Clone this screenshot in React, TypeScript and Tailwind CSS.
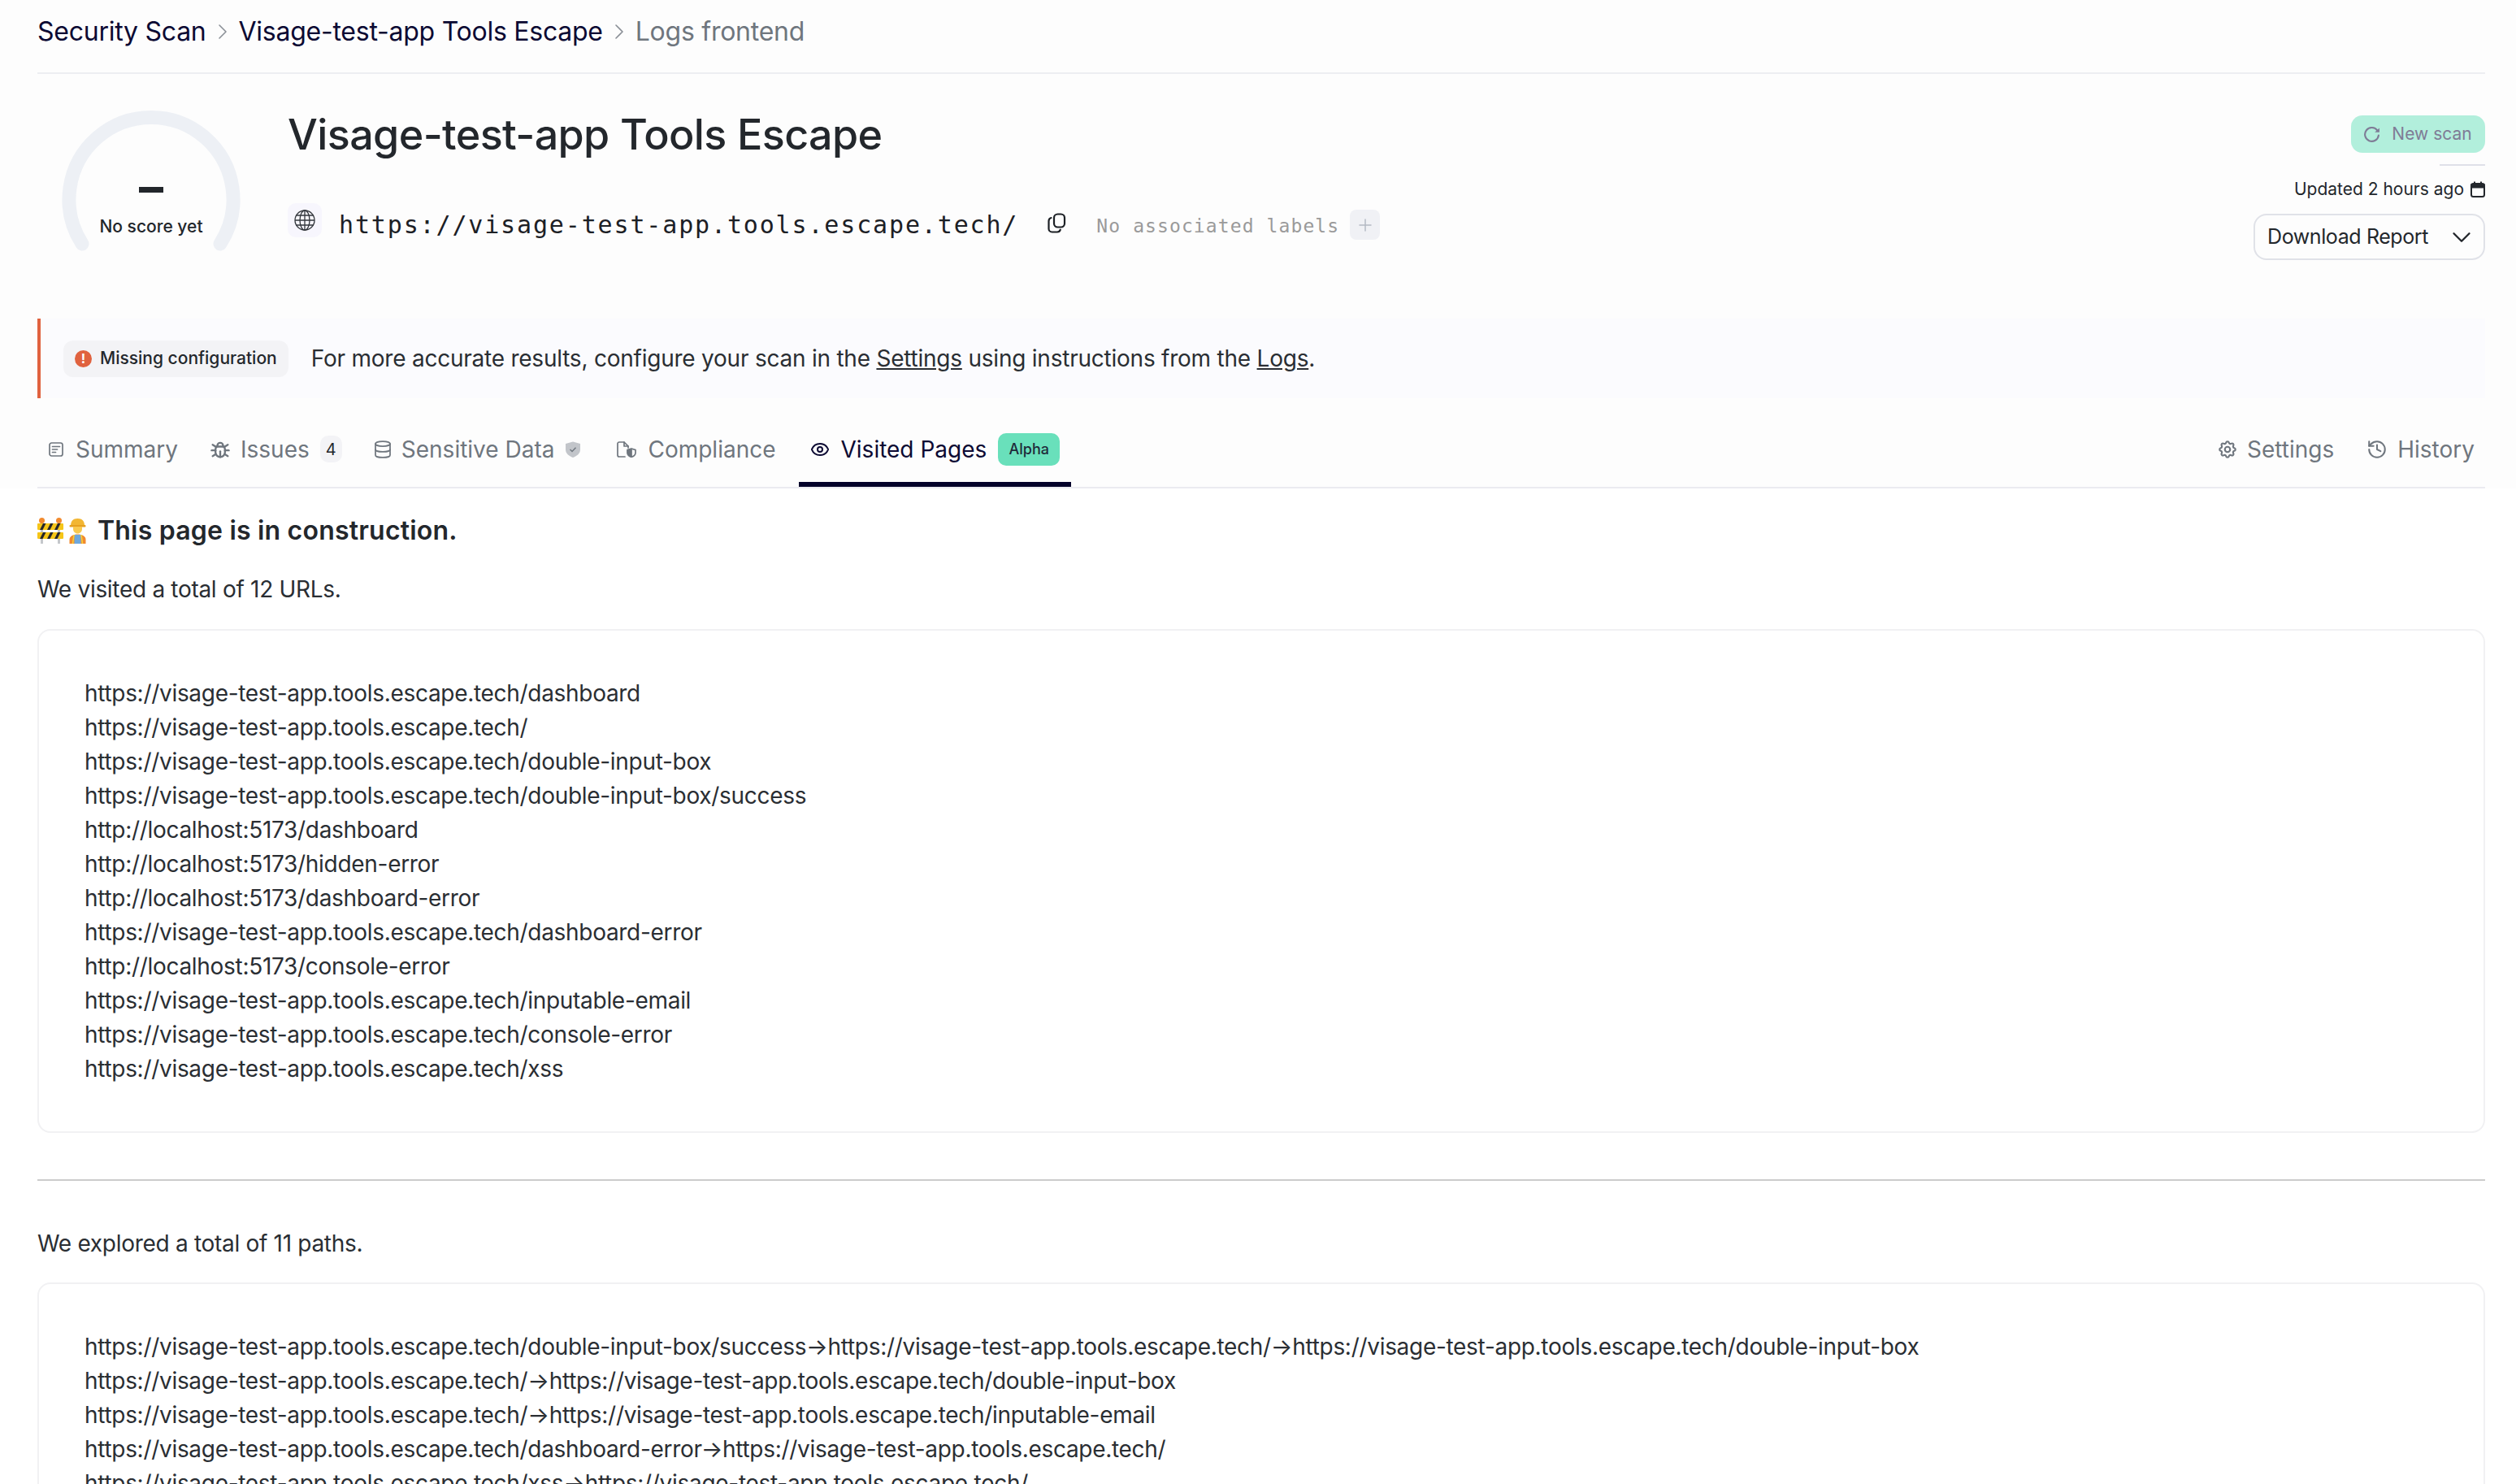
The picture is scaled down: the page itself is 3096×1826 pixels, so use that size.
import { ChevronDown, ChevronRight, Database, Eye, History, Plus } from "lucide-react";
import { TbBug, TbSettings } from "react-icons/tb";

const visitedUrls = [
  "https://visage-test-app.tools.escape.tech/dashboard",
  "https://visage-test-app.tools.escape.tech/",
  "https://visage-test-app.tools.escape.tech/double-input-box",
  "https://visage-test-app.tools.escape.tech/double-input-box/success",
  "http://localhost:5173/dashboard",
  "http://localhost:5173/hidden-error",
  "http://localhost:5173/dashboard-error",
  "https://visage-test-app.tools.escape.tech/dashboard-error",
  "http://localhost:5173/console-error",
  "https://visage-test-app.tools.escape.tech/inputable-email",
  "https://visage-test-app.tools.escape.tech/console-error",
  "https://visage-test-app.tools.escape.tech/xss",
];

const exploredPaths = [
  "https://visage-test-app.tools.escape.tech/double-input-box/success→https://visage-test-app.tools.escape.tech/→https://visage-test-app.tools.escape.tech/double-input-box",
  "https://visage-test-app.tools.escape.tech/→https://visage-test-app.tools.escape.tech/double-input-box",
  "https://visage-test-app.tools.escape.tech/→https://visage-test-app.tools.escape.tech/inputable-email",
  "https://visage-test-app.tools.escape.tech/dashboard-error→https://visage-test-app.tools.escape.tech/",
  "https://visage-test-app.tools.escape.tech/xss→https://visage-test-app.tools.escape.tech/",
];

function ScoreGauge() {
  return (
    <div className="relative mt-[1px] h-[176px] w-[220px] shrink-0">
      <svg width="220" height="176" viewBox="0 0 220 176" fill="none">
        <path d="M25 165 A101 101 0 1 1 195 165" stroke="#edf0f5" strokeWidth="17" strokeLinecap="round" />
      </svg>
      <div className="absolute left-0 right-0 top-[95px] flex justify-center">
        <div className="h-[7px] w-[30px] bg-[#22262b]" />
      </div>
      <p className="absolute left-0 right-0 top-[130px] text-center text-[21px] font-medium leading-[28px] text-[#22262b]">No score yet</p>
    </div>
  );
}

function GlobeIcon() {
  return (
    <svg width="26" height="26" viewBox="0 0 26 26" fill="none" stroke="#33373c" strokeWidth="1.3">
      <circle cx="13" cy="13" r="12" />
      <ellipse cx="13" cy="13" rx="6" ry="12" />
      <path d="M13 1v24M2 7h22M1 13h24M2 19h22" />
    </svg>
  );
}

function CopyIcon() {
  return (
    <svg width="23" height="25" viewBox="0 0 23 25" fill="none" stroke="#1c2025" strokeWidth="2.2" strokeLinecap="round">
      <rect x="8" y="1.5" width="13" height="16" rx="4.5" />
      <path d="M4.5 6C2.5 6.5 1.5 8 1.5 10v9.5a4 4 0 0 0 4 4h6.5a4 4 0 0 0 3.8-2.8" />
    </svg>
  );
}

function NewScanIcon() {
  return (
    <svg width="20" height="19" viewBox="0 0 19 18" fill="none" stroke="#7f7c96" strokeWidth="2">
      <path d="M15.5 4.2A8 8 0 1 0 17 10" strokeLinecap="round" />
      <path d="M12.5 6.5L18 1.5V6.5Z" fill="#7f7c96" stroke="none" />
    </svg>
  );
}

function CalendarIcon() {
  return (
    <svg width="18" height="20" viewBox="0 0 18 20" fill="none" stroke="#23272c" strokeWidth="2">
      <rect x="1" y="3" width="16" height="16" rx="2.5" />
      <path d="M1.5 4h15v3.5h-15z" fill="#23272c" />
      <path d="M5 0.5v3M13 0.5v3" />
    </svg>
  );
}

function SummaryIcon() {
  return (
    <svg width="18" height="18" viewBox="0 0 18 18" fill="none" stroke="#6f767e" strokeWidth="1.7" strokeLinecap="round">
      <rect x="1" y="1" width="16" height="16" rx="2.5" />
      <path d="M4.5 5.5h9M4.5 9h6M4.5 12.5h4" />
    </svg>
  );
}

function ShieldMark() {
  return (
    <svg width="20" height="20" viewBox="0 0 20 20" fill="none">
      <path d="M10 0.5L19 3V10C19 15 15 18 10 20C5 18 1 15 1 10V3Z" fill="#c2c5ca" />
      <path d="M6.5 10L9 12.5L13.5 7.8" stroke="#6f767e" strokeWidth="1.4" />
    </svg>
  );
}

function ComplianceIcon() {
  return (
    <svg width="24" height="20" viewBox="0 0 24 20" fill="none" stroke="#6f767e" strokeWidth="1.7" strokeLinecap="round" strokeLinejoin="round">
      <path d="M10 19H3a2 2 0 0 1-2-2V3a2 2 0 0 1 2-2h6l5 5v2" />
      <path d="M9 1v5h5" />
      <path d="M18 9l5 1.6V14c0 2.5-2 4.4-5 5.4-3-1-5-2.9-5-5.4v-3.4z" />
      <path d="M18 9.5v9.5c-2.5-1-4.5-2.6-4.5-5v-3z" fill="#6f767e" />
    </svg>
  );
}

function ConstructionEmoji() {
  return (
    <svg width="62" height="32" viewBox="0 0 62 32">
      <rect x="4" y="6" width="3" height="26" fill="#c4c7cb" />
      <rect x="25" y="6" width="3" height="26" fill="#c4c7cb" />
      <circle cx="5.5" cy="3.5" r="3.5" fill="#f28a2e" />
      <circle cx="26.5" cy="3.5" r="3.5" fill="#f28a2e" />
      <rect x="0" y="7" width="32" height="8" rx="1" fill="#f5c518" />
      <rect x="0" y="18" width="32" height="8" rx="1" fill="#f5c518" />
      <path d="M3 15l4-8h3.5l-4 8zM12 15l4-8h3.5l-4 8zM21 15l4-8h3.5l-4 8zM3 26l4-8h3.5l-4 8zM12 26l4-8h3.5l-4 8zM21 26l4-8h3.5l-4 8z" fill="#26262a" />
      <path d="M41 10c0-6 3-9 8.5-9s8.5 3 8.5 9z" fill="#f2b632" />
      <rect x="39.5" y="9" width="20" height="2.5" rx="1" fill="#e6a020" />
      <path d="M44 11h11v3c0 3-2.5 5.5-5.5 5.5S44 17 44 14z" fill="#f9c94e" />
      <path d="M39.5 32v-5c0-4 4-6.5 10-6.5s10 2.5 10 6.5v5z" fill="#f28a2e" />
      <path d="M45.5 21h8v11h-8z" fill="#6fa8dc" />
      <path d="M45 21l-1.5 11M54 21l1.5 11" stroke="#f5d33a" strokeWidth="1.5" />
    </svg>
  );
}

function TextCard({ lines }: { lines: string[] }) {
  return (
    <div className="rounded-[16px] border-2 border-[#f1f1f3] bg-white px-[56px] pb-[56px] pt-[56px]">
      {lines.map((line) => (
        <p key={line} className="text-[28px] leading-[42px] tracking-[-0.3px] text-[#2a2e33]">
          {line}
        </p>
      ))}
    </div>
  );
}

export default function App() {
  return (
    <div className="h-[1826px] w-[3096px] overflow-hidden bg-white font-['Inter',sans-serif]">
      {/* top part of the page has a slightly off-white ground */}
      <div className="bg-[#fdfdfd] pl-[46px] pr-[38px]">
        <nav className="flex h-[91px] items-center border-b-2 border-[#edeef2] pb-[12px] text-[32px] tracking-[-0.25px] text-[#0c0a33]">
          <span>Security Scan</span>
          <ChevronRight className="mx-[4px] h-[32px] w-[32px] text-[#8a8f96]" strokeWidth={1.2} />
          <span>Visage-test-app Tools Escape</span>
          <ChevronRight className="mx-[4px] h-[32px] w-[32px] text-[#8a8f96]" strokeWidth={1.2} />
          <span className="text-[#6f767e]">Logs frontend</span>
        </nav>

        <header className="flex pl-[30px] pt-[43px]">
          <ScoreGauge />
          <div className="ml-[58px] flex-1">
            <h1 className="text-[52px] font-medium leading-[64px] tracking-[-0.6px] text-[#23272c]">Visage-test-app Tools Escape</h1>
            <div className="mt-[52px] flex items-start">
              <span className="flex h-[42px] w-[42px] items-center justify-center rounded-[10px] bg-[#f7f6fd]">
                <GlobeIcon />
              </span>
              <span className="ml-[21px] mt-[6px] font-['DejaVu_Sans_Mono',monospace] text-[30px] leading-[42px] tracking-[1.85px] text-[#1c2025]">
                https://visage-test-app.tools.escape.tech/
              </span>
              <span className="ml-[36px] mt-[12px]">
                <CopyIcon />
              </span>
              <span className="ml-[37px] mt-[7px] font-['DejaVu_Sans_Mono',monospace] text-[23px] leading-[42px] tracking-[1.1px] text-[#9a9a9a]">
                No associated labels
              </span>
              <span className="ml-[13px] mt-[8px] flex h-[37px] w-[37px] items-center justify-center rounded-[8px] bg-[#f0f1f5]">
                <Plus className="h-[24px] w-[24px] text-[#b4bac3]" strokeWidth={1.5} />
              </span>
            </div>
          </div>
          <div className="mt-[8px] flex flex-col items-end">
            <button className="flex h-[46px] w-[165px] items-center justify-center gap-[14px] rounded-[14px] bg-[#b2efdc] text-[21px] text-[#7f7c96]">
              <NewScanIcon />
              New scan
            </button>
            <div className="mt-[14px] h-[2px] w-[56px] bg-[#dfe0e8]" />
            <div className="mt-[14px] flex items-center gap-[8px] text-[21px] leading-[30px] text-[#23272c]">
              Updated 2 hours ago
              <CalendarIcon />
            </div>
            <button className="mt-[15px] flex h-[57px] w-[285px] items-center justify-between whitespace-nowrap rounded-[16px] border-2 border-[#e0e2e8] pl-[15px] pr-[8px] text-[25px] tracking-[-0.4px] text-[#23272c]">
              <span className="mt-[1px]">Download Report</span>
              <ChevronDown className="h-[38px] w-[38px]" strokeWidth={1.5} />
            </button>
          </div>
        </header>

        <div className="mt-[72px] flex h-[98px] items-center border-l-4 border-[#e0623f] bg-[#fbfbfe] pl-[28px]">
          <span className="flex h-[45px] items-center gap-[10px] rounded-[12px] bg-[#f3f3f6] px-[14px] text-[21px] font-medium text-[#23272c]">
            <span className="flex h-[21px] w-[21px] items-center justify-center rounded-full bg-[#e0623f] text-[16px] font-bold leading-none text-white">!</span>
            Missing configuration
          </span>
          <p className="ml-[28px] text-[28px] tracking-[-0.23px] text-[#2a2e33]">
            For more accurate results, configure your scan in the <span className="underline">Settings</span> using instructions from the <span className="underline">Logs</span>.
          </p>
        </div>

        <div className="mt-[22px] flex h-[89px] items-stretch justify-between border-b-2 border-[#ebebf0] text-[28px] text-[#6f767e]">
          <div className="flex items-stretch">
            <div className="flex items-center gap-[15px] border-b-[6px] border-transparent pl-[14px] pr-[21px]">
              <SummaryIcon />
              Summary
            </div>
            <div className="flex items-center gap-[11px] border-b-[6px] border-transparent pl-[17px] pr-[17px]">
              <TbBug size={28} />
              Issues
              <span className="ml-[2px] flex h-[33px] w-[27px] items-center justify-center rounded-[10px] bg-[#f3f3f6] text-[20px] text-[#23272c]">4</span>
            </div>
            <div className="flex items-center gap-[11px] border-b-[6px] border-transparent pl-[21px] pr-[23px]">
              <Database className="h-[24px] w-[24px]" strokeWidth={1.75} />
              Sensitive Data
              <span className="ml-[2px]">
                <ShieldMark />
              </span>
            </div>
            <div className="flex items-center gap-[14px] border-b-[6px] border-transparent px-[21px]">
              <ComplianceIcon />
              Compliance
            </div>
            <div className="ml-[7px] flex items-center gap-[14px] border-b-[6px] border-[#04022a] px-[14px] text-[#0c0a33]">
              <Eye className="h-[24px] w-[24px]" strokeWidth={2} />
              Visited Pages
              <span className="flex h-[40px] w-[76px] items-center justify-center rounded-[10px] bg-[#69e0bb] text-[18px] font-medium text-[#1f2a3a]">Alpha</span>
            </div>
          </div>
          <div className="flex items-stretch">
            <div className="flex items-center gap-[11px] border-b-[6px] border-transparent pr-[40px]">
              <TbSettings size={26} />
              Settings
            </div>
            <div className="flex items-center gap-[12px] border-b-[6px] border-transparent pr-[13px]">
              <History className="h-[26px] w-[26px]" strokeWidth={1.9} />
              History
            </div>
          </div>
        </div>
      </div>

      <main className="pl-[46px] pr-[38px]">
        <div className="mt-[32px] flex items-center gap-[12px]">
          <ConstructionEmoji />
          <h2 className="text-[32px] font-semibold leading-[40px] tracking-[0.2px] text-[#23272c]">This page is in construction.</h2>
        </div>
        <p className="mt-[32px] text-[28px] leading-[40px] tracking-[-0.3px] text-[#2a2e33]">We visited a total of 12 URLs.</p>
        <div className="mt-[29px]">
          <TextCard lines={visitedUrls} />
        </div>
        <hr className="mt-[57px] border-t-2 border-[#cccccc]" />
        <p className="mt-[57px] text-[28px] leading-[40px] tracking-[-0.3px] text-[#2a2e33]">We explored a total of 11 paths.</p>
        <div className="mt-[28px]">
          <TextCard lines={exploredPaths} />
        </div>
      </main>
    </div>
  );
}
